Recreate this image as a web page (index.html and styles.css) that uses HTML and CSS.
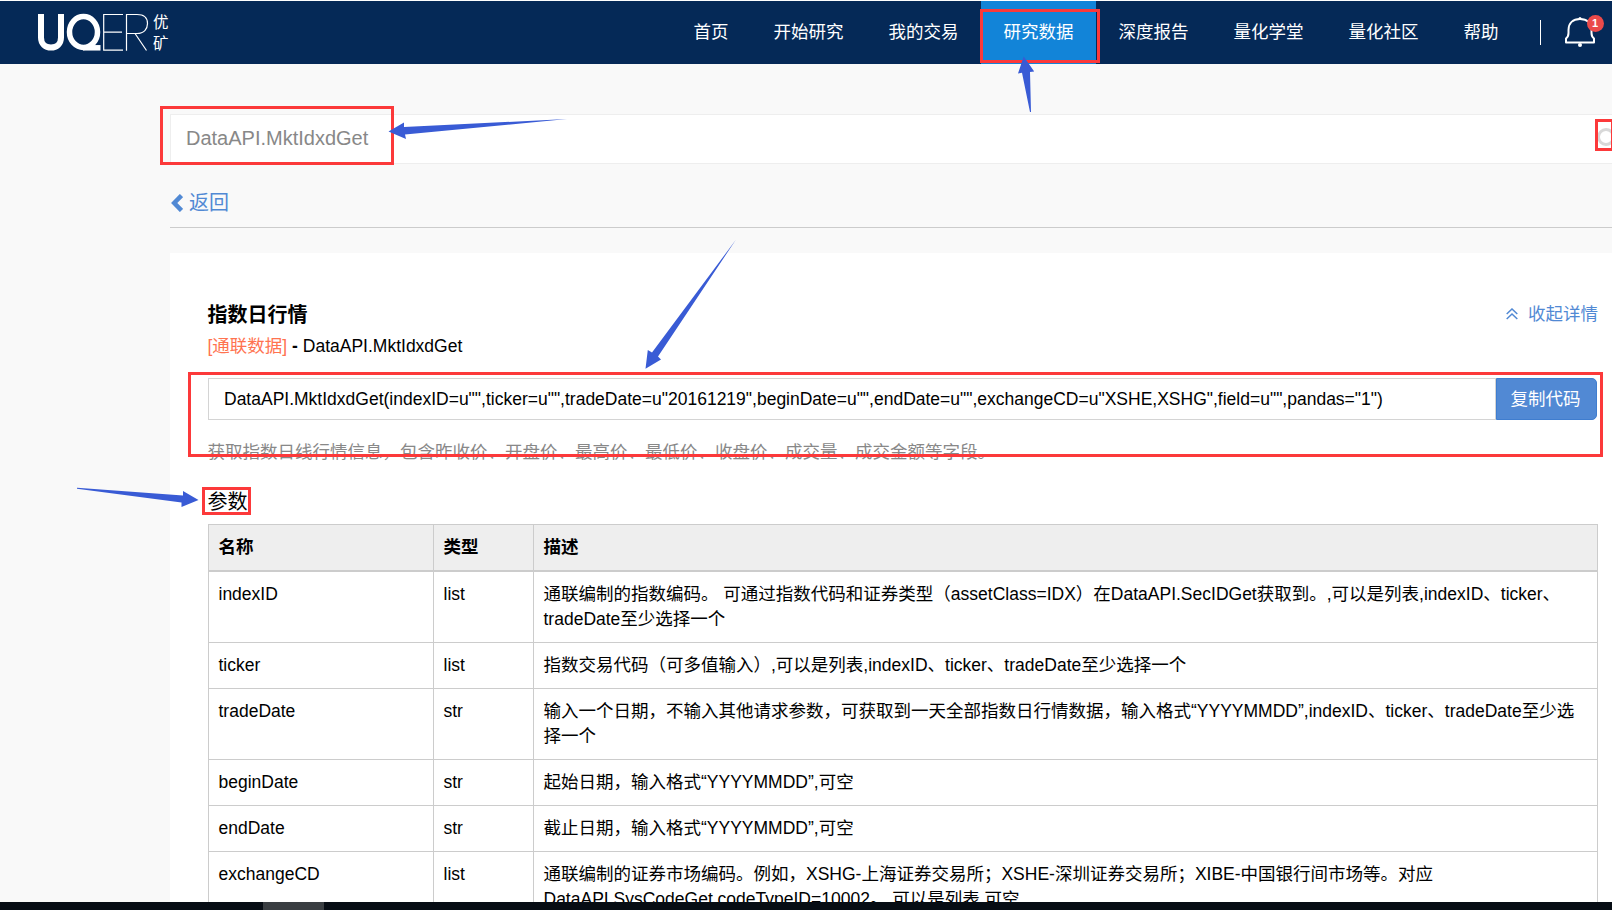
FILE: index.html
```html
<!DOCTYPE html>
<html lang="zh-CN">
<head>
<meta charset="utf-8">
<title>优矿 - 研究数据</title>
<link rel="stylesheet" href="styles.css">
</head>
<body>
<div class="page">
  <header class="navbar">
    <a class="logo" aria-label="UQER">
      <svg width="111" height="40" viewBox="0 0 111 40" fill="none" stroke="#fff">
        <path d="M3 1V24.5C3 31 7.500 34.500 13 34.500S23 31 23 24.500V1" stroke-width="6"/>
        <ellipse cx="45.500" cy="19" rx="14" ry="15.500" stroke-width="5.500"/>
        <path d="M45 34.800H62.500" stroke-width="5.500"/>
        <path d="M85 1.500H65.700V37.200H85M65.700 19.200H84M88.500 37.800V1.500H99C106 1.500 109.500 5 109.500 10.500S106 20.500 99 20.500H88.500M97 20.500L108.500 37.500" stroke-width="1.200"/>
      </svg>
      <span class="logo-cn"><span>优</span><span>矿</span></span>
    </a>
    <nav class="menu">
      <a>首页</a><a>开始研究</a><a>我的交易</a><a class="active">研究数据</a><a>深度报告</a><a>量化学堂</a><a>量化社区</a><a>帮助</a>
    </nav>
    <div class="notice">
      <svg width="32" height="32" viewBox="0 0 32 32" fill="none" stroke="#fff" stroke-width="2" stroke-linejoin="round">
        <path d="M2 26.500V22.500C4 21 4.500 20 4.500 17V14C4.500 7 9 3 16 3S27.500 7 27.500 14V17C27.500 20 28 21 30 22.500V26.500Z"/>
        <circle cx="16" cy="2.500" r="1.500" fill="#fff" stroke="none"/>
        <circle cx="16" cy="29" r="2" fill="#fff" stroke="none"/>
      </svg>
      <span class="badge">1</span>
    </div>
  </header>

  <main class="content">
    <div class="search">
      <span>DataAPI.MktIdxdGet</span>
      <svg class="search-icon" width="24" height="24" viewBox="0 0 24 24" fill="none" stroke="#d8d8d8" stroke-width="3"><circle cx="9" cy="9" r="7.500"/><path d="M14.500 14.500L21 21"/></svg>
    </div>
    <a class="back">
      <svg width="12" height="18" viewBox="0 0 12 18" fill="none" stroke="#5189d4" stroke-width="4.500"><path d="M10.500 1.500L3.200 9L10.500 16.500"/></svg>
      <span>返回</span>
    </a>
    <section class="panel">
      <div class="title-row">
        <h1>指数日行情</h1>
        <a class="collapse">
          <svg width="12" height="12" viewBox="0 0 12 12" fill="none" stroke="#5189d4" stroke-width="1.500"><path d="M.7 6L6 1L11.300 6M.7 11L6 6L11.300 11"/></svg>
          <span>收起详情</span>
        </a>
      </div>
      <p class="source"><span class="vendor">[通联数据]</span> <b>-</b> DataAPI.MktIdxdGet</p>
      <div class="code-row">
        <div class="code">DataAPI.MktIdxdGet(indexID=u"",ticker=u"",tradeDate=u"20161219",beginDate=u"",endDate=u"",exchangeCD=u"XSHE,XSHG",field=u"",pandas="1")</div>
        <div class="copy">复制代码</div>
      </div>
      <p class="desc">获取指数日线行情信息，包含昨收价、开盘价、最高价、最低价、收盘价、成交量、成交金额等字段。</p>
      <h2>参数</h2>
      <div class="params">
        <div class="row head"><div>名称</div><div>类型</div><div>描述</div></div>
        <div class="row"><div>indexID</div><div>list</div><div>通联编制的指数编码。 可通过指数代码和证券类型（assetClass=IDX）在DataAPI.SecIDGet获取到。,可以是列表,indexID、ticker、<br>tradeDate至少选择一个</div></div>
        <div class="row"><div>ticker</div><div>list</div><div>指数交易代码（可多值输入）,可以是列表,indexID、ticker、tradeDate至少选择一个</div></div>
        <div class="row"><div>tradeDate</div><div>str</div><div>输入一个日期，不输入其他请求参数，可获取到一天全部指数日行情数据，输入格式“YYYYMMDD”,indexID、ticker、tradeDate至少选<br>择一个</div></div>
        <div class="row"><div>beginDate</div><div>str</div><div>起始日期，输入格式“YYYYMMDD”,可空</div></div>
        <div class="row"><div>endDate</div><div>str</div><div>截止日期，输入格式“YYYYMMDD”,可空</div></div>
        <div class="row"><div>exchangeCD</div><div>list</div><div>通联编制的证券市场编码。例如，XSHG-上海证券交易所；XSHE-深圳证券交易所；XIBE-中国银行间市场等。对应<br>DataAPI.SysCodeGet.codeTypeID=10002。,可以是列表,可空</div></div>
      </div>
    </section>
  </main>

  <footer class="taskbar"><span></span></footer>

  <svg class="marks" width="1612" height="910" viewBox="0 0 1612 910">
    <g fill="none" stroke="#fc393a" stroke-width="3">
      <rect x="981.500" y="10.500" width="117" height="51"/>
      <rect x="161.500" y="107.500" width="231" height="56"/>
      <rect x="1596.500" y="120.500" width="16" height="29"/>
      <rect x="189.500" y="373.500" width="1412" height="82"/>
      <rect x="203.500" y="488.500" width="46" height="25"/>
    </g>
    <g fill="#395bd5">
      <path d="M1023.700 56.500L1034.200 71.500L1030 72L1031 112H1030L1022 72.800L1018 73.500Z"/>
      <path d="M388.500 131.500L404 122.500V127L567 119L405 134.500L406 139Z"/>
      <path d="M645.500 368.700L647.800 350L652 352.500L735.700 240L658 356.500L661 359.600Z"/>
      <path d="M198.500 500L183 491V495.500L77 487.800V488.800L181.500 502.500L181.500 507Z"/>
    </g>
  </svg>
</div>
</body>
</html>
```
FILE: styles.css
```css
* { box-sizing: border-box; }
body {
  margin: 0;
  overflow: hidden;
  background: #f9f9f9;
  color: #000;
  font: 17.5px/25px "Liberation Sans", Arial, "Noto Sans CJK SC", sans-serif;
  text-spacing-trim: space-all;
}
h1, h2, p { margin: 0; font-weight: 400; }
.page {
  position: relative;
  display: flex;
  flex-direction: column;
  width: 1612px;
  height: 910px;
  overflow: hidden;
}
.navbar {
  display: flex;
  flex: none;
  height: 64px;
  border-top: 1px solid #fff;
  background: #052957;
  color: #fff;
}
.logo { display: flex; gap: 4px; width: 671px; padding: 12px 0 0 38px; }
.logo-cn {
  display: flex;
  flex-direction: column;
  font-size: 15.5px;
  line-height: 21px;
  margin-top: -1px;
}
.menu { display: flex; }
.menu a { height: 63px; padding: 0 22.5px; line-height: 63px; white-space: nowrap; }
.menu .active { background: #1284d8; }
.notice {
  position: relative;
  height: 25px;
  margin: 19px 0 0 18.5px;
  padding-left: 23px;
  border-left: 1px solid #fff;
}
.notice svg { display: block; margin-top: -4px; }
.badge {
  position: absolute;
  left: 46px;
  top: -5px;
  width: 17px;
  height: 17px;
  border-radius: 50%;
  background: #ea4a4a;
  font-size: 11px;
  font-weight: 700;
  line-height: 16px;
  text-align: center;
}
.content {
  display: flex;
  flex: 1;
  flex-direction: column;
  min-height: 0;
  margin-left: 170px;
  padding-top: 50px;
  overflow: hidden;
}
.search {
  display: flex;
  flex: none;
  align-items: center;
  justify-content: space-between;
  height: 50px;
  margin-right: -10px;
  padding: 0 0 2px 15px;
  border: 1px solid #eee;
  background: #fff;
  color: #888;
  font-size: 20px;
}
.search-icon { flex: none; margin-top: 4px; }
.back {
  display: flex;
  flex: none;
  align-items: center;
  gap: 6px;
  height: 64px;
  padding: 15px 0 0 1px;
  border-bottom: 1px solid #ccc;
  color: #5189d4;
  font-size: 20px;
}
.panel {
  flex: none;
  width: 1442px;
  margin-top: 25px;
  padding: 48px 14px 0 37.5px;
  background: #fff;
}
.title-row { display: flex; align-items: center; justify-content: space-between; height: 28px; }
h1 { font-size: 20px; font-weight: 700; }
.collapse { display: flex; align-items: center; gap: 10px; margin: -2px 0 0; color: #5189d4; }
.source { height: 49px; padding-top: 5px; }
.vendor { color: #ff7350; }
.code-row { display: flex; width: 1389.5px; height: 42px; }
.code {
  flex: 1;
  padding-left: 15.5px;
  border: 1px solid #d4d4d4;
  line-height: 40px;
  white-space: nowrap;
}
.copy {
  width: 101px;
  padding-right: 2px;
  border: 1px solid #3f7dcf;
  border-radius: 0 5px 5px 0;
  background: #5189d4;
  color: #fff;
  line-height: 40px;
  text-align: center;
}
.desc { height: 61px; padding-top: 20px; color: #888; }
h2 { height: 43px; padding-top: 9px; font-size: 20px; }
.params { width: 1390.5px; border: solid #ccc; border-width: 1px 0 0 1px; }
.row { display: grid; grid-template-columns: 225px 100px 1fr; }
.row > div {
  padding: 10px;
  border: solid #ccc;
  border-width: 0 1px 1px 0;
  white-space: nowrap;
}
.head > div { border-bottom-width: 2px; background: #eee; font-weight: 700; }
.taskbar { flex: none; height: 8px; padding-left: 263px; background: #070d14; }
.taskbar span { display: block; width: 61px; height: 8px; background: #3a3e42; }
.marks { position: absolute; left: 0; top: 0; pointer-events: none; }
```
